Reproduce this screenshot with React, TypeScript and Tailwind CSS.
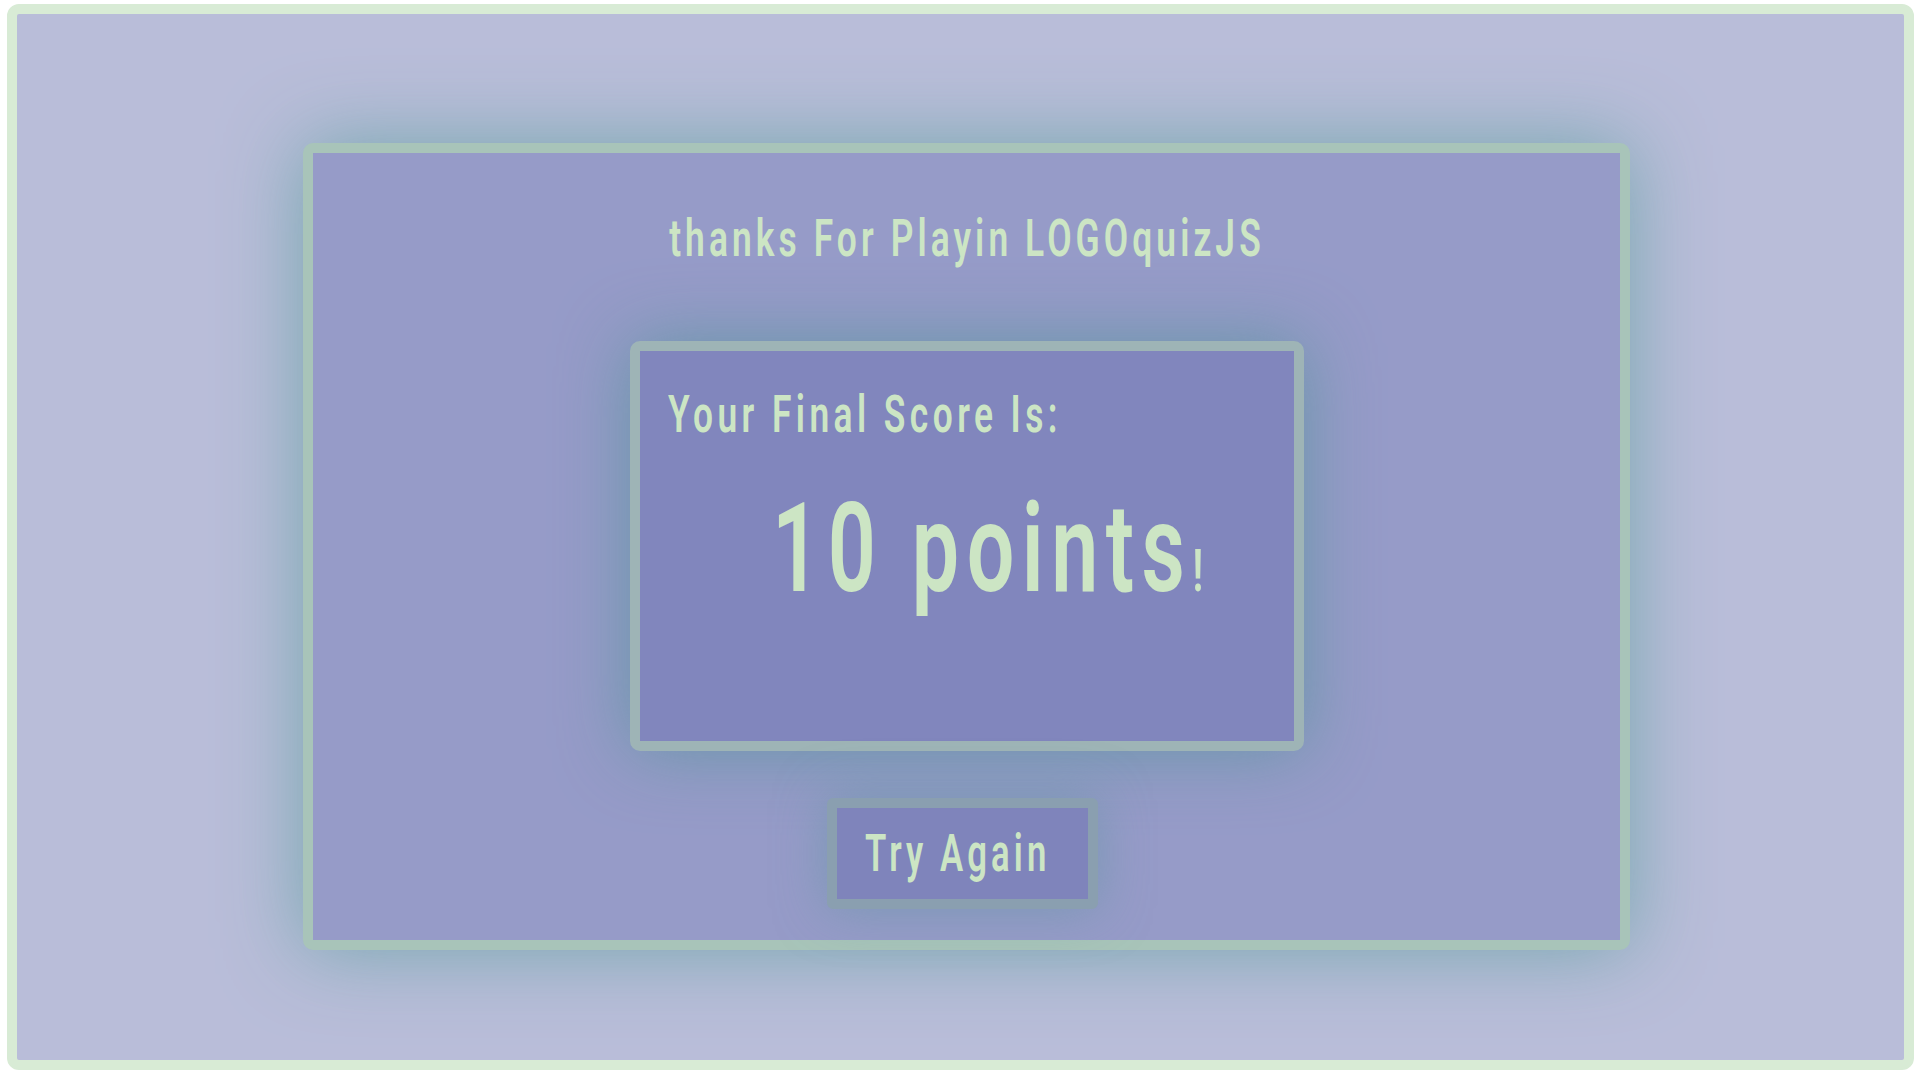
const narrow = 'inline-block whitespace-nowrap scale-x-[0.68]'

export default function App() {
  return (
    <div className="pl-[7px] pt-[4px] font-['Roboto',_sans-serif]">
      <div className="flex h-[1066px] w-[1907px] items-start rounded-[12px] border-[10px] border-[#d8ebd5] bg-[#b9bdd9] pl-[286px] pt-[129px]">
        <div className="flex h-[807px] w-[1327px] flex-col items-center rounded-[10px] border-[10px] border-[#a8c4b9] bg-[#969bc8] shadow-[0_0_80px_rgba(110,165,170,0.9)]">
          <h1 className="mt-[60px] text-[52px] font-semibold leading-none tracking-[6px] text-[#cce5c4]">
            <span className={`${narrow} origin-center`}>thanks For Playin LOGOquizJS</span>
          </h1>

          <div className="mt-[76px] h-[410px] w-[674px] rounded-[10px] border-[10px] border-[#9eb4b6] bg-[#8186bd] pl-[28px] pt-[38px] shadow-[0_0_70px_rgba(100,150,165,0.95)]">
            <p className="text-[52px] font-semibold leading-none tracking-[6.5px] text-[#cce5c4]">
              <span className={`${narrow} origin-left`}>Your Final Score Is:</span>
            </p>
            <p className="mt-[46px] pl-[104px] text-[124px] font-semibold leading-none tracking-[11px] text-[#cce5c4]">
              <span className={`${narrow} origin-left`}>
                10 points<span className="text-[59px] tracking-normal">!</span>
              </span>
            </p>
          </div>

          <button className="mr-[9px] mt-[47px] h-[111px] w-[271px] overflow-hidden rounded-[6px] border-[10px] border-[#8a9fb0] bg-[#7f84bb] pl-[28px] text-left text-[51px] font-semibold leading-none tracking-[6px] text-[#cce5c4] shadow-[0_0_50px_rgba(100,150,165,0.6)]">
            <span className={`${narrow} origin-left`}>Try Again</span>
          </button>
        </div>
      </div>
    </div>
  )
}
